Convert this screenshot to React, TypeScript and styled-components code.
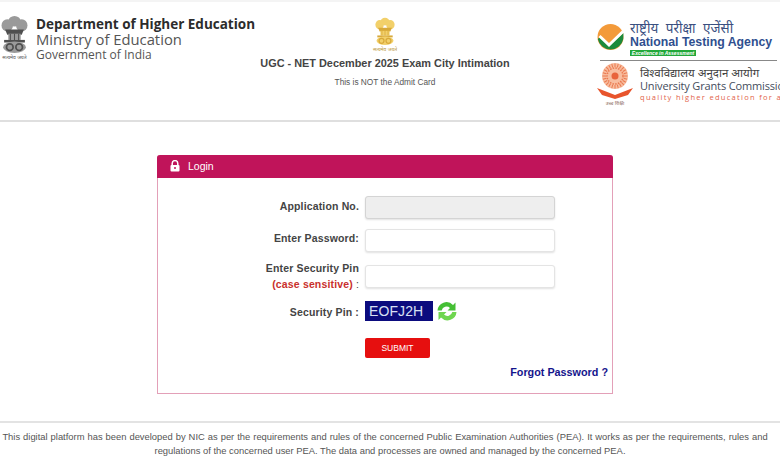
import React from "react";
import styled, { createGlobalStyle } from "styled-components";

const GlobalStyle = createGlobalStyle`
  html, body {
    margin: 0;
    padding: 0;
    background: #fff;
    font-family: "Liberation Sans", Arial, sans-serif;
    color: #444;
  }
  * { box-sizing: border-box; }
`;

const Page = styled.div`
  width: 780px;
  height: 470px;
  overflow: hidden;
  border-top: 2px solid #f4f4f4;
`;

const Header = styled.header`
  height: 120px;
  display: flex;
  border-bottom: 2px solid #dfdfdf;
`;

const MinistryBlock = styled.div`
  width: 260px;
  display: flex;
  align-items: flex-start;
  padding: 13px 0 0 1px;
  flex-shrink: 0;
`;

const Emblem = styled.div<{ $width: number }>`
  width: ${(p) => p.$width}px;
  flex-shrink: 0;
  display: flex;
  flex-direction: column;
  align-items: center;
  line-height: 0;
`;

const EmblemCaption = styled.span<{ $color: string }>`
  font-family: "Noto Sans", sans-serif;
  font-size: 5px;
  line-height: 6px;
  white-space: nowrap;
  color: ${(p) => p.$color};
`;

const MinistryText = styled.div`
  font-family: "Open Sans", sans-serif;
  white-space: nowrap;
  margin-left: 8px;
  padding-top: 1px;
`;

const MinistryLine = styled.div<{ $size: number; $bold?: boolean }>`
  font-size: ${(p) => p.$size}px;
  font-weight: ${(p) => (p.$bold ? 700 : 400)};
  line-height: ${(p) => (p.$bold ? 16 : 15)}px;
  color: ${(p) => (p.$bold ? "#2c2c2c" : "#555")};
`;

const TitleBlock = styled.div`
  width: 250px;
  display: flex;
  flex-direction: column;
  align-items: center;
  padding-top: 15px;
`;

const Title = styled.h1`
  margin: 4px 0 0;
  font-size: 10.9px;
  line-height: 14px;
  font-weight: 700;
  color: #444;
  white-space: nowrap;
`;

const Subtitle = styled.p`
  margin: 7px 0 0;
  font-size: 8.3px;
  line-height: 11px;
  color: #555;
`;

const AgencyBlock = styled.div`
  flex: 1;
  min-width: 0;
  overflow: hidden;
  padding: 20px 0 0 87px;
`;

const NtaRow = styled.div`
  display: flex;
  align-items: flex-start;
  gap: 6px;
  height: 38px;
`;

const NtaText = styled.div`
  display: flex;
  flex-direction: column;
  white-space: nowrap;
`;

const Hindi = styled.div<{ $color: string; $size: number; $wordGap?: number }>`
  font-family: "Noto Sans", "DejaVu Sans", sans-serif;
  font-size: ${(p) => p.$size}px;
  line-height: 13px;
  word-spacing: ${(p) => p.$wordGap ?? 0}px;
  color: ${(p) => p.$color};
  white-space: nowrap;
`;

const NtaName = styled.div`
  font-size: 12.3px;
  line-height: 14px;
  font-weight: 700;
  color: #2f4f8f;
`;

const NtaTag = styled.div`
  width: 66px;
  height: 6px;
  margin-top: 1px;
  background: #22a83a;
  color: #fff;
  font-size: 5px;
  line-height: 6px;
  font-style: italic;
  font-weight: 700;
  text-align: center;
`;

const Rule = styled.div`
  width: 177px;
  height: 1px;
  margin-left: 3px;
  background: #888;
`;

const UgcRow = styled.div`
  display: flex;
  align-items: flex-start;
  gap: 6px;
  margin: 1px 0 0 -1px;
`;

const UgcText = styled.div`
  padding-top: 4px;
`;

const UgcName = styled.div`
  font-family: "Open Sans", sans-serif;
  font-size: 11px;
  line-height: 14px;
  letter-spacing: -0.15px;
  color: #444c5c;
  white-space: nowrap;
`;

const UgcMotto = styled.div`
  font-family: "Open Sans", sans-serif;
  font-size: 7.5px;
  line-height: 10px;
  margin-top: -1px;
  letter-spacing: 1.3px;
  color: #e2644a;
  white-space: nowrap;
`;

const Main = styled.main`
  height: 299px;
  padding: 33px 0 0 157px;
`;

const Card = styled.section`
  width: 456px;
  height: 239px;
  border: 1px solid #e3a0b8;
  border-top: 0;
  border-radius: 3px 3px 0 0;
`;

const CardHeader = styled.div`
  height: 23px;
  margin: 0 -1px;
  padding: 0 0 2px 13px;
  display: flex;
  align-items: center;
  gap: 8px;
  background: #c0145a;
  border-radius: 3px 3px 0 0;
  color: #fff;
  font-size: 10.5px;
`;

const Row = styled.div<{ $top: number }>`
  display: flex;
  align-items: center;
  gap: 6px;
  margin-top: ${(p) => p.$top}px;
`;

const Label = styled.label<{ $lift?: number }>`
  width: 201px;
  flex-shrink: 0;
  font-size: 10.5px;
  font-weight: 700;
  color: #444;
  text-align: right;
  line-height: 16px;
  margin-bottom: ${(p) => p.$lift ?? 0}px;
  letter-spacing: 0.15px;
`;

const Warning = styled.span`
  color: #c9302c;
`;

const Colon = styled.span`
  font-weight: 400;
`;

const Input = styled.input<{ $filled?: boolean }>`
  display: block;
  width: 190px;
  height: 23px;
  border: 1px solid ${(p) => (p.$filled ? "#d4d4d4" : "#e4e4e4")};
  border-radius: 3px;
  background: ${(p) => (p.$filled ? "#eeeeee" : "#fff")};
  box-shadow: 0 1px 2px rgba(0, 0, 0, 0.12);
  outline: none;
`;

const CaptchaGroup = styled.div`
  display: flex;
  align-items: center;
  gap: 3px;
`;

const Captcha = styled.div`
  width: 68px;
  height: 20px;
  padding-left: 4px;
  background: #0b0b7e;
  color: #d8e0f4;
  font-size: 14px;
  line-height: 20px;
  letter-spacing: 0.1px;
`;

const Submit = styled.button`
  width: 65px;
  height: 20px;
  margin-left: 207px;
  border: 0;
  border-radius: 2px;
  background: #e60f0f;
  color: #fff;
  font-family: inherit;
  font-size: 8.5px;
  padding: 0;
`;

const Forgot = styled.a`
  display: block;
  margin: 7px 4px 0 0;
  text-align: right;
  font-size: 10.8px;
  line-height: 14px;
  font-weight: 700;
  color: #14148c;
`;

const Footer = styled.footer`
  border-top: 2px solid #e3e3e3;
  padding-top: 7px;
  text-align: center;
  font-size: 9.4px;
  line-height: 14px;
  color: #555;
  white-space: nowrap;
`;

const FooterLine = styled.div<{ $spread?: boolean }>`
  word-spacing: ${(p) => (p.$spread ? 0.4 : 0)}px;
  padding-right: ${(p) => (p.$spread ? 10 : 0)}px;
`;

const NationalEmblem = ({ fill, shade }: { fill: string; shade: string }) => (
  <svg viewBox="0 0 26 38" width="100%">
    <ellipse cx="13" cy="6" rx="6" ry="5" fill={fill} />
    <ellipse cx="6" cy="10" rx="5.5" ry="6" fill={fill} />
    <ellipse cx="20" cy="10" rx="5.5" ry="6" fill={fill} />
    <path d="M4 14h18l-2 5H6z" fill={shade} />
    <path d="M7 18h12v6H7z" fill={fill} />
    <path d="M9 18v6M13 18v6M17 18v6" stroke={shade} strokeWidth="1" />
    <rect x="3" y="24" width="20" height="2.5" fill={shade} />
    <ellipse cx="13" cy="31" rx="11" ry="5.5" fill={fill} />
    <circle cx="8.5" cy="31" r="3.2" fill="none" stroke={shade} strokeWidth="1.6" />
    <circle cx="17.5" cy="31" r="3.2" fill="none" stroke={shade} strokeWidth="1.6" />
  </svg>
);

const TickLogo = () => (
  <svg width="27" height="28" viewBox="0 0 27 28" style={{ marginTop: 1, flexShrink: 0 }}>
    <circle cx="13.5" cy="14" r="13" fill="#f39a3a" />
    <path d="M0.8 16 A13 13 0 0 0 26.3 16 L26.4 10 L12 23 L3 14 Z" fill="#1c8a3c" />
    <path d="M2.5 13 L12 22 L26 8.5" fill="none" stroke="#fff" strokeWidth="3" />
  </svg>
);

const UgcWheel = () => {
  const spokes = Array.from({ length: 24 }, (_, i) => (i * 360) / 24);
  return (
    <svg width="38" height="44" viewBox="0 0 38 44" style={{ flexShrink: 0 }}>
      <circle cx="19" cy="14" r="13" fill="#f8bd9f" />
      {spokes.map((a) => (
        <path key={a} d="M19 5V1.5" stroke="#ea7a50" strokeWidth="1" transform={`rotate(${a} 19 14)`} />
      ))}
      <circle cx="19" cy="14" r="8" fill="none" stroke="#ea7a50" strokeWidth="1.5" strokeDasharray="1.5 1.2" />
      <circle cx="19" cy="14" r="3.5" fill="#e8643c" />
      <path d="M1 26 L19 33 L37 26 L32 33 L19 37 L6 33Z" fill="#e8542c" />
      <text x="19" y="43" textAnchor="middle" fontSize="5" fill="#8a6a60" fontFamily="Noto Sans, sans-serif">उच्च शिक्षा</text>
    </svg>
  );
};

const LockIcon = () => (
  <svg width="10" height="12" viewBox="0 0 10 12">
    <path d="M2.2 5.5V3.4a2.8 2.8 0 0 1 5.6 0v2.1" fill="none" stroke="#fff" strokeWidth="1.5" />
    <rect x="0.5" y="5" width="9" height="6.5" rx="1" fill="#fff" />
    <circle cx="5" cy="8" r="1" fill="#c0145a" />
  </svg>
);

const RefreshIcon = () => (
  <svg width="22" height="22" viewBox="0 0 22 22">
    <path d="M1.5 10.5A9 9 0 0 1 17 5l2.5-2.5v8h-8L14 8a5 5 0 0 0-8.3 2.5z" fill="#45bf35" />
    <path d="M20.5 12A9 9 0 0 1 5 17.500l-2.500 2.500v-8h8L8 14.500a5 5 0 0 0 8.300-2.500z" fill="#6fd64f" />
  </svg>
);

const App = () => {
  return (
    <Page>
      <GlobalStyle />
      <Header>
        <MinistryBlock>
          <Emblem $width={27}>
            <NationalEmblem fill="#9a9a9a" shade="#4f4f4f" />
            <EmblemCaption $color="#555">सत्यमेव जयते</EmblemCaption>
          </Emblem>
          <MinistryText>
            <MinistryLine $size={13.5} $bold>Department of Higher Education</MinistryLine>
            <MinistryLine $size={14.8}>Ministry of Education</MinistryLine>
            <MinistryLine $size={12}>Government of India</MinistryLine>
          </MinistryText>
        </MinistryBlock>
        <TitleBlock>
          <Emblem $width={20}>
            <NationalEmblem fill="#f2d06a" shade="#d8a93a" />
            <EmblemCaption $color="#b8963a">सत्यमेव जयते</EmblemCaption>
          </Emblem>
          <Title>UGC - NET December 2025 Exam City Intimation</Title>
          <Subtitle>This is NOT the Admit Card</Subtitle>
        </TitleBlock>
        <AgencyBlock>
          <NtaRow>
            <TickLogo />
            <NtaText>
              <Hindi $color="#3a4f80" $size={13.5} $wordGap={4}>राष्ट्रीय परीक्षा एजेंसी</Hindi>
              <NtaName>National Testing Agency</NtaName>
              <NtaTag>Excellence in Assessment</NtaTag>
            </NtaText>
          </NtaRow>
          <Rule />
          <UgcRow>
            <UgcWheel />
            <UgcText>
              <Hindi $color="#444" $size={11.5}>विश्वविद्यालय अनुदान आयोग</Hindi>
              <UgcName>University Grants Commission</UgcName>
              <UgcMotto>quality higher education for all</UgcMotto>
            </UgcText>
          </UgcRow>
        </AgencyBlock>
      </Header>
      <Main>
        <Card>
          <CardHeader>
            <LockIcon />
            Login
          </CardHeader>
          <form>
            <Row $top={18}>
              <Label $lift={3}>Application No.</Label>
              <Input $filled />
            </Row>
            <Row $top={10}>
              <Label $lift={5}>Enter Password:</Label>
              <Input />
            </Row>
            <Row $top={8}>
              <Label>
                Enter Security Pin
                <br />
                <Warning>(case sensitive)</Warning> <Colon>:</Colon>
              </Label>
              <Input />
            </Row>
            <Row $top={8}>
              <Label $lift={-2}>Security Pin :</Label>
              <CaptchaGroup>
                <Captcha>EOFJ2H</Captcha>
                <RefreshIcon />
              </CaptchaGroup>
            </Row>
            <Row $top={16}>
              <Submit type="button">SUBMIT</Submit>
            </Row>
            <Forgot>Forgot Password ?</Forgot>
          </form>
        </Card>
      </Main>
      <Footer>
        <FooterLine $spread>
          This digital platform has been developed by NIC as per the requirements and rules of the concerned Public Examination Authorities (PEA). It works as per the requirements, rules and
        </FooterLine>
        <FooterLine>
          regulations of the concerned user PEA. The data and processes are owned and managed by the concerned PEA.
        </FooterLine>
      </Footer>
    </Page>
  );
};

export default App;
